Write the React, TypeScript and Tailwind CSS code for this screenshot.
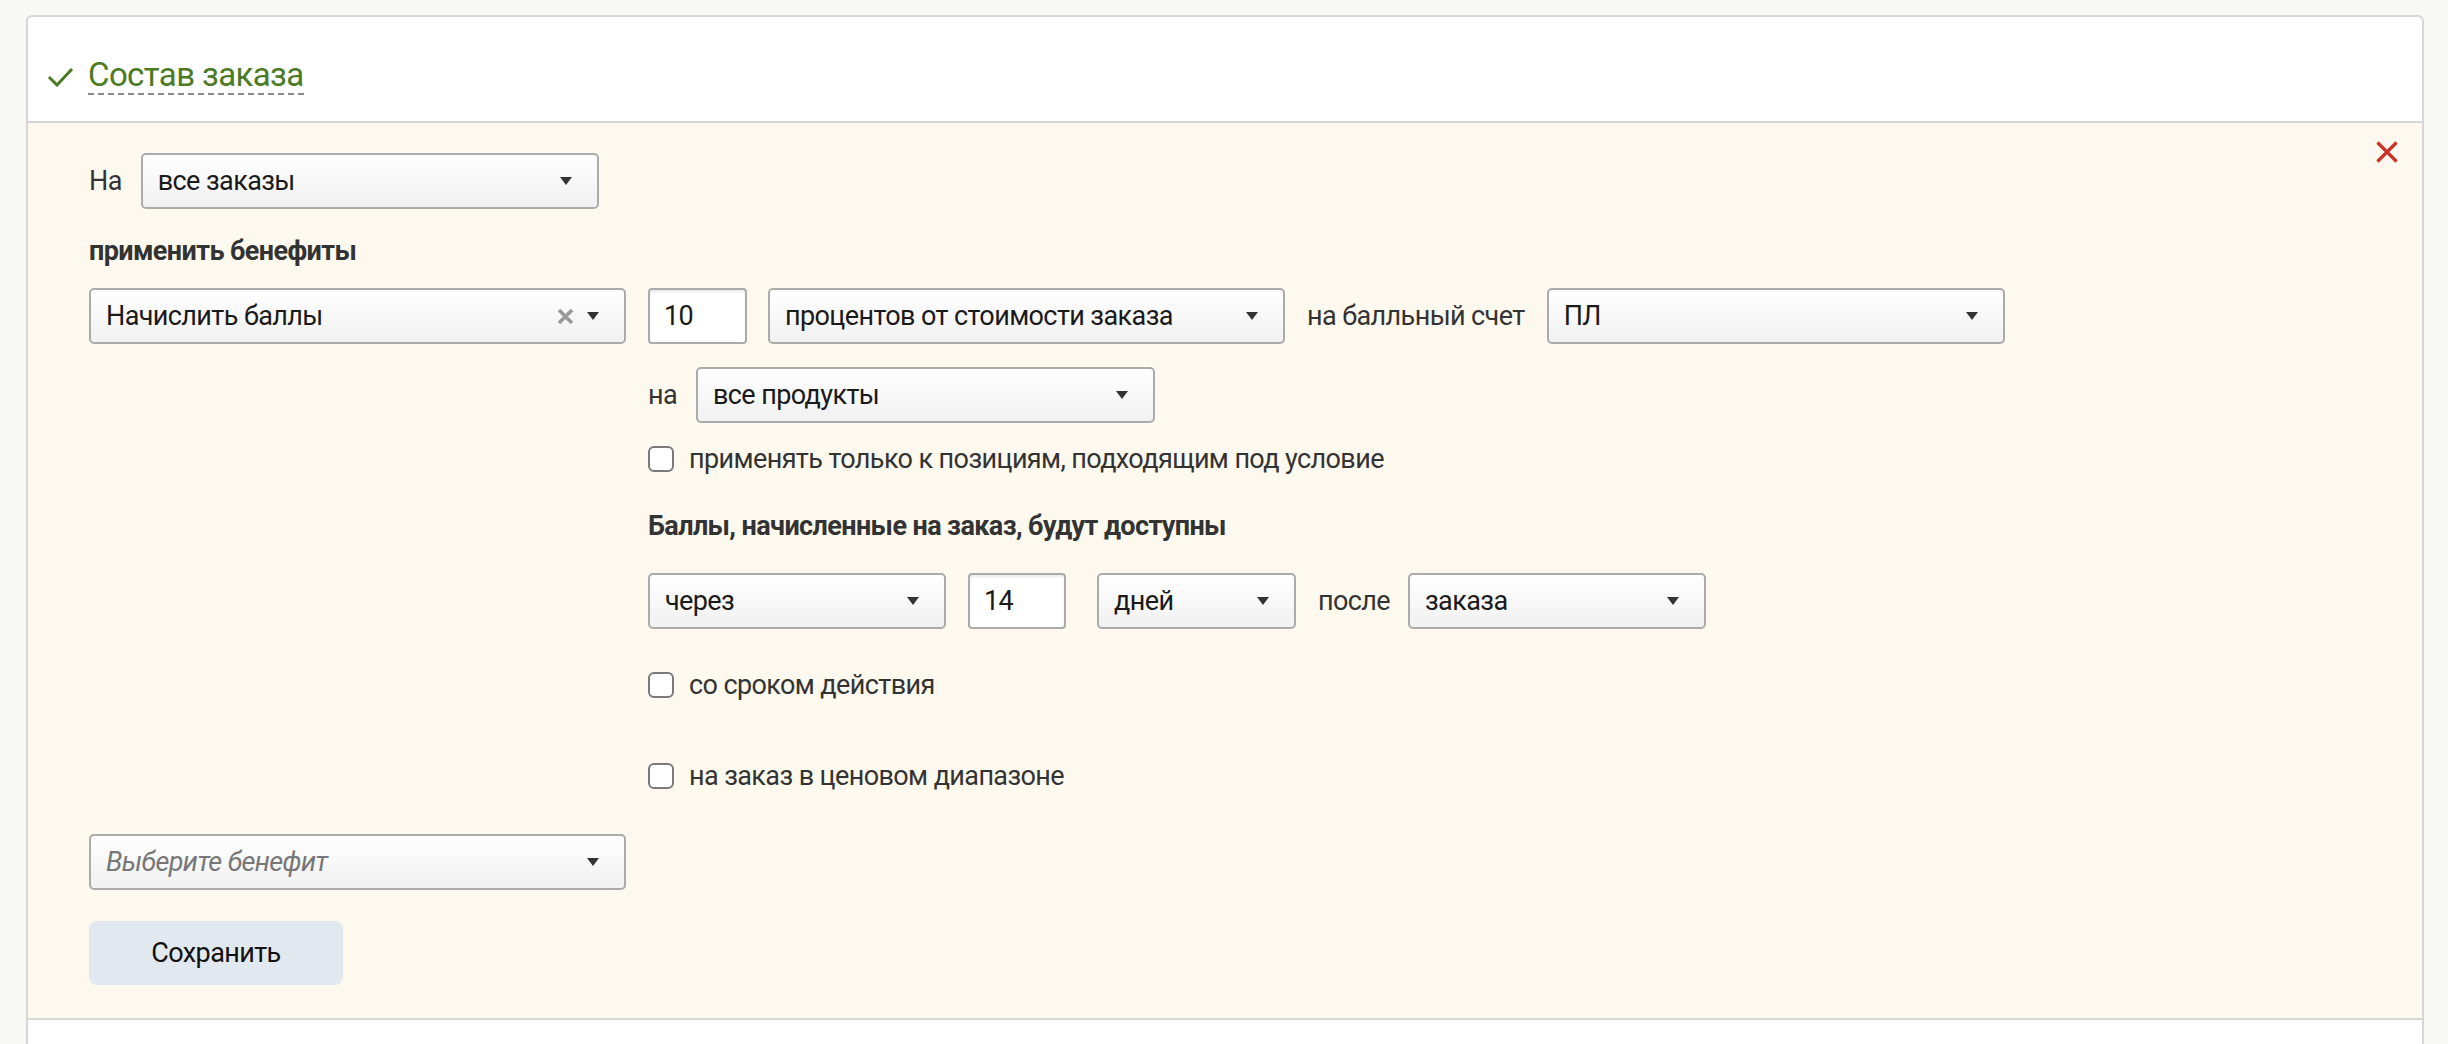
import React from 'react';

const Caret = () => (
  <svg width="12" height="8" viewBox="0 0 12 8" className="shrink-0">
    <path d="M0 0h12L6 8z" fill="#333" />
  </svg>
);

type SelectProps = {
  value: string;
  width: string;
  placeholder?: boolean;
  clear?: boolean;
};

function Select({ value, width, placeholder, clear }: SelectProps) {
  return (
    <div
      className={`${width} h-[56px] shrink-0 flex items-center pl-[15px] pr-[25px] border-2 border-[#ababab] rounded-[5px] bg-linear-to-b from-white to-[#f1f1f1]`}
    >
      <span className={`flex-1 truncate ${placeholder ? 'italic text-[#777]' : 'text-[#1a1a1a]'}`}>{value}</span>
      {clear && (
        <svg width="17" height="17" viewBox="0 0 17 17" className="mr-[13px] shrink-0">
          <path d="M2 2l13 13M15 2L2 15" stroke="#9a9a9a" strokeWidth="3.8" />
        </svg>
      )}
      <Caret />
    </div>
  );
}

function NumInput({ value, width }: { value: string; width: string }) {
  return (
    <div
      className={`${width} h-[56px] shrink-0 flex items-center pl-[14px] bg-white border-2 border-[#ababab] rounded-[4px] shadow-[inset_0_2px_2px_rgba(0,0,0,0.08)] text-[#1a1a1a]`}
    >
      {value}
    </div>
  );
}

function Check({ label }: { label: string }) {
  return (
    <label className="flex items-center h-[26px]">
      <span className="w-[26px] h-[26px] rounded-[6px] border-2 border-[#7a7a7a] bg-white shrink-0" />
      <span className="ml-[15px] text-[#333] whitespace-nowrap">{label}</span>
    </label>
  );
}

export default function App() {
  return (
    <div className="h-[1044px] overflow-hidden bg-[#f8f8f5] pt-[15px] pl-[26px] pr-[24px] font-['Roboto',sans-serif] text-[27px] tracking-[-0.6px] leading-[36px]">
      <div className="border-2 border-[#d6d6d6] rounded-t-[6px] bg-white">
        <div className="h-[104px] flex items-start pt-[40px] pl-[19px]">
          <svg width="27" height="20" viewBox="0 0 27 20" className="mt-[10px] shrink-0">
            <path d="M2 10l8 8L25 2" fill="none" stroke="#4b7a23" strokeWidth="3" />
          </svg>
          <span className="ml-[14px] text-[33px] tracking-[-0.6px] leading-[36px] text-[#4b7a23] border-b-2 border-dashed border-[#8a8a8a]">
            Состав заказа
          </span>
        </div>

        <div className="relative bg-[#fdf9ee] border-t-2 border-b-2 border-[#d6d6d6] pl-[61px] pt-[30px] pb-[33px]">
          <svg width="22" height="22" viewBox="0 0 22 22" className="absolute top-[18px] right-[24px]">
            <path d="M1.5 1.5l19 19M20.5 1.5l-19 19" stroke="#cc3128" strokeWidth="3.2" />
          </svg>

          <div className="flex items-center">
            <span className="text-[#333]">На</span>
            <div className="ml-[19px]">
              <Select value="все заказы" width="w-[458px]" />
            </div>
          </div>

          <div className="mt-[24px] font-bold text-[#333]">применить бенефиты</div>

          <div className="mt-[19px] flex items-start">
            <Select value="Начислить баллы" width="w-[537px]" clear />
            <div className="ml-[22px] flex flex-col">
              <div className="flex items-center">
                <NumInput value="10" width="w-[99px]" />
                <div className="ml-[21px]">
                  <Select value="процентов от стоимости заказа" width="w-[517px]" />
                </div>
                <span className="ml-[22px] mr-[22px] text-[#333] whitespace-nowrap">на балльный счет</span>
                <Select value="ПЛ" width="w-[458px]" />
              </div>

              <div className="mt-[23px] flex items-center">
                <span className="text-[#333] w-[48px]">на</span>
                <Select value="все продукты" width="w-[459px]" />
              </div>

              <div className="mt-[23px]">
                <Check label="применять только к позициям, подходящим под условие" />
              </div>

              <div className="mt-[36px] font-bold text-[#333] whitespace-nowrap">Баллы, начисленные на заказ, будут доступны</div>

              <div className="mt-[29px] flex items-center">
                <Select value="через" width="w-[298px]" />
                <div className="ml-[22px]">
                  <NumInput value="14" width="w-[98px]" />
                </div>
                <div className="ml-[31px]">
                  <Select value="дней" width="w-[199px]" />
                </div>
                <span className="ml-[22px] w-[90px] shrink-0 text-[#333]">после</span>
                <Select value="заказа" width="w-[298px]" />
              </div>

              <div className="mt-[43px]">
                <Check label="со сроком действия" />
              </div>
              <div className="mt-[65px]">
                <Check label="на заказ в ценовом диапазоне" />
              </div>
            </div>
          </div>

          <div className="mt-[45px]">
            <Select value="Выберите бенефит" width="w-[537px]" placeholder />
          </div>

          <button className="mt-[31px] w-[254px] h-[64px] rounded-[8px] bg-[#e1e8ef] text-[#111] flex items-center justify-center">
            Сохранить
          </button>
        </div>

        <div className="h-[60px] bg-white" />
      </div>
    </div>
  );
}
